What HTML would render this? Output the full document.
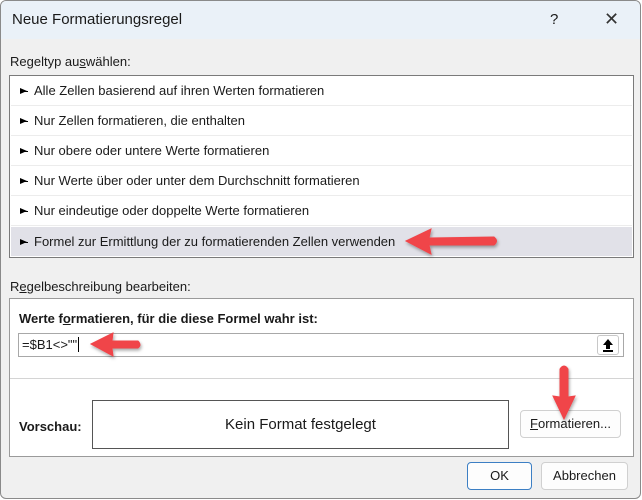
<!DOCTYPE html>
<html><head><meta charset="utf-8"><style>
*{margin:0;padding:0;box-sizing:border-box}
body{width:642px;height:500px;background:#fff;font-family:"Liberation Sans",sans-serif;font-size:13px;color:#1a1a1a;position:relative;overflow:hidden}
.win{position:absolute;left:0;top:0;width:641px;height:499px;background:#f0f0f0;border:1px solid #8a8a8a;border-radius:6px;overflow:hidden}
.title{position:absolute;left:0;top:0;width:100%;height:38px;background:#eaf1f8}
.abs{position:absolute;white-space:nowrap}
.list{position:absolute;left:8px;top:74px;width:625px;height:183px;background:#fff;border:1px solid #7a7a7a}
.row{position:absolute;left:1px;width:621px;height:30px;border-bottom:1px solid #ececec;line-height:30px;padding-left:8px}
.row b{display:inline-block;width:15px;vertical-align:middle;height:30px;position:relative}
.row b:before{content:"";position:absolute;left:1px;top:14px;width:8px;height:1px;background:#000}
.row b:after{content:"";position:absolute;left:1px;top:11px;border-left:7px solid #000;border-top:3.5px solid transparent;border-bottom:3.5px solid transparent}
.panel{position:absolute;left:8px;top:297px;width:625px;height:159px;background:#fff;border:1px solid #9a9a9a}
.btn{position:absolute;background:#fdfdfd;border:1px solid #d0d0d0;border-radius:4px;text-align:center}
</style></head><body>
<div class="win">
<div class="title"></div>
<div class="abs" style="left:11px;top:10px;font-size:15px">Neue Formatierungsregel</div>
<div class="abs" style="left:549px;top:10px;font-size:15px">?</div>
<div class="abs" style="left:603px;top:8px;font-size:18px;font-weight:300;color:#333">✕</div>
<div class="abs" style="left:9px;top:53px">Regeltyp au<u>s</u>wählen:</div>
<div class="list">
<div class="row" style="top:0"><b></b>Alle Zellen basierend auf ihren Werten formatieren</div>
<div class="row" style="top:30px"><b></b>Nur Zellen formatieren, die enthalten</div>
<div class="row" style="top:60px"><b></b>Nur obere oder untere Werte formatieren</div>
<div class="row" style="top:90px"><b></b>Nur Werte über oder unter dem Durchschnitt formatieren</div>
<div class="row" style="top:120px"><b></b>Nur eindeutige oder doppelte Werte formatieren</div>
<div class="row" style="top:151px;height:29px;background:#e1e1e8;border:none;line-height:29px"><b style="height:29px"></b>Formel zur Ermittlung der zu formatierenden Zellen verwenden</div>
</div>
<div class="abs" style="left:9px;top:278px">R<u>e</u>gelbeschreibung bearbeiten:</div>
<div class="panel">
<div class="abs" style="left:9px;top:12px;font-weight:bold">Werte f<u>o</u>rmatieren, für die diese Formel wahr ist:</div>
<div class="abs" style="left:8px;top:34px;width:606px;height:24px;border:1px solid #a8a8a8;background:#fff;line-height:22px;padding-left:3px">=$B1&lt;&gt;""<span style="border-left:1px solid #000;margin-left:1px"></span></div>
<div class="abs" style="left:587px;top:36px;width:22px;height:20px;border:1px solid #c8c8c8;border-radius:3px;background:#fff">
<svg width="20" height="18" viewBox="0 0 20 18"><path d="M10 3 L15 9 H12 V13 H8 V9 H5 Z" fill="#000"/><rect x="5" y="14" width="10" height="2" fill="#000"/></svg></div>
<div class="abs" style="left:0;top:79px;width:623px;border-top:1px solid #d4d4d4"></div>
<div class="abs" style="left:9px;top:120px;font-weight:bold">Vorschau:</div>
<div class="abs" style="left:82px;top:101px;width:417px;height:49px;border:1px solid #555;text-align:center;line-height:47px;font-size:15px">Kein Format festgelegt</div>
<div class="btn" style="left:510px;top:111px;width:101px;height:28px;line-height:26px"><u>F</u>ormatieren...</div>
</div>
<div class="btn" style="left:466px;top:461px;width:65px;height:28px;line-height:26px;border-color:#3c7fc4">OK</div>
<div class="btn" style="left:540px;top:461px;width:87px;height:28px;line-height:26px">Abbrechen</div>
<svg class="abs" style="left:0;top:0" width="642" height="500">
<defs><filter id="s"><feDropShadow dx="1" dy="2" stdDeviation="1.5" flood-opacity="0.35"/></filter></defs>
<g fill="#f04449" stroke="#f04449" filter="url(#s)">
<path d="M405 240 L430 228 L428 237 L493 236 Q498 240 493 244 L428 244 L430 253 Z"/>
<path d="M90 343 L112 332 L111 340 L137 340 Q141 344 137 347 L111 347 L112 355 Z"/>
<path d="M563 418 L552 395 L559 396 L559 368 Q563 362 567 368 L567 396 L574 395 Z"/>
</g></svg>
</div>
</body></html>
